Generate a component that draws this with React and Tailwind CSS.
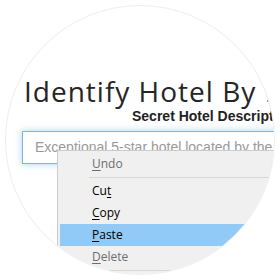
export default function App() {
  const menuFont = { fontFamily: '"Open Sans", "Noto Sans", sans-serif' };
  return (
    <div className="w-[280px] h-[280px] bg-white p-[5px]">
      <div className="relative w-[270px] h-[270px] rounded-full overflow-hidden border border-[#eeeeee] bg-white">
        <div
          className="mt-[68px] pl-[18px] text-[28px] leading-[34px] tracking-[1px] text-[#252525] whitespace-nowrap"
          style={{ fontFamily: '"Open Sans", Lato, sans-serif' }}
        >
          Identify Hotel By
          <span className="ml-[11px] inline-block w-[2px] h-[2px] bg-[#9a9a9a] align-baseline"></span>
        </div>
        <div
          className="pl-[126px] text-[14px] leading-[16px] font-bold text-[#222] whitespace-nowrap"
          style={{ fontFamily: '"Liberation Sans", Arial, sans-serif' }}
        >
          Secret Hotel Description
        </div>
        <div className="mt-[7px] ml-[16px] w-[320px] h-[33px] border border-[#80b3e3] bg-white shadow-[0_0_7px_rgba(102,175,233,0.55)] pl-[12px] pt-[7px]">
          <div
            className="text-[14px] leading-[16px] text-[#999] whitespace-nowrap"
            style={{ fontFamily: '"Liberation Sans", Arial, sans-serif' }}
          >
            Exceptional 5-star hotel located by the sea
          </div>
        </div>

        <div
          className="absolute left-[51px] top-[144px] w-[280px] bg-[#f0f0f0] border border-[#cccccc] py-[2px] px-[2px] text-[12px]"
          style={menuFont}
        >
          <div className="h-[22px] flex items-center pl-[32px] text-[#6d6d6d]">
            <span><u className="underline-offset-2">U</u>ndo</span>
          </div>
          <div className="py-[2px] pl-[29px]">
            <div className="h-px bg-[#d7d7d7]"></div>
          </div>
          <div className="h-[22px] flex items-center pl-[32px] text-black">
            <span>Cu<u className="underline-offset-2">t</u></span>
          </div>
          <div className="h-[22px] flex items-center pl-[32px] text-black">
            <span><u className="underline-offset-2">C</u>opy</span>
          </div>
          <div className="h-[22px] flex items-center pl-[32px] text-black bg-[#91c9f7]">
            <span><u className="underline-offset-2">P</u>aste</span>
          </div>
          <div className="h-[22px] flex items-center pl-[32px] text-[#6d6d6d]">
            <span><u className="underline-offset-2">D</u>elete</span>
          </div>
          <div className="py-[2px] pl-[29px]">
            <div className="h-px bg-[#d7d7d7]"></div>
          </div>
          <div className="h-[22px]"></div>
        </div>
      </div>
    </div>
  );
}
